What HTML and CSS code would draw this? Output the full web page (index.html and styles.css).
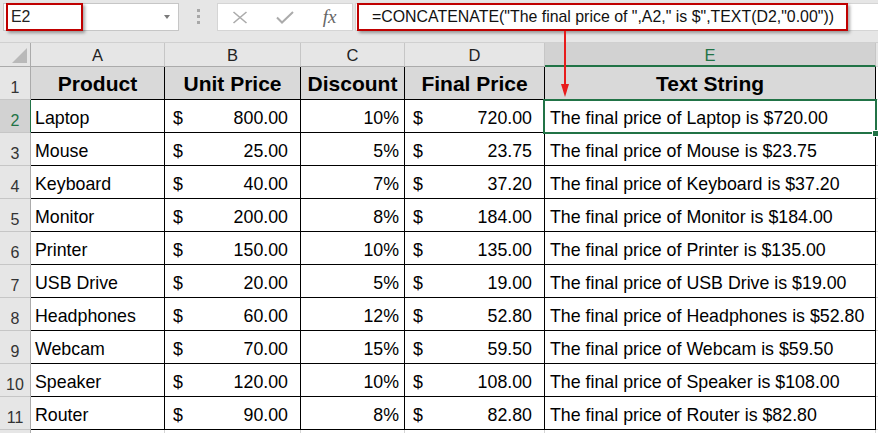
FILE: index.html
```html
<!DOCTYPE html>
<html>
<head>
<meta charset="utf-8">
<link rel="stylesheet" href="styles.css">
</head>
<body>
<div class="toolbar">
  <div class="namebox">
    <span class="name-hl">E2</span>
    <span class="dd"></span>
  </div>
  <div class="grip"><i></i><i></i><i></i></div>
  <div class="fbtns">
    <span class="slot"><svg width="16" height="13" viewBox="0 0 16 13"><path d="M1.5 1 L14.5 12 M14.5 1 L1.5 12" stroke="#ababab" stroke-width="1.6" fill="none"/></svg></span>
    <span class="slot"><svg width="18" height="13" viewBox="0 0 18 13"><path d="M1 6.5 L6 11.5 L17 1" stroke="#ababab" stroke-width="2" fill="none"/></svg></span>
    <span class="slot fx">fx</span>
  </div>
  <div class="formula">
    <span class="formula-hl">=CONCATENATE("The final price of ",A2," is $",TEXT(D2,"0.00"))</span>
  </div>
</div>

<div class="sheet">
  <div class="corner"></div>
  <div class="ch">A</div>
  <div class="ch">B</div>
  <div class="ch">C</div>
  <div class="ch">D</div>
  <div class="ch sel">E</div>
  <div class="ch f"></div>

  <div class="rh">1</div>
  <div class="c hd">Product</div>
  <div class="c hd">Unit Price</div>
  <div class="c hd">Discount</div>
  <div class="c hd">Final Price</div>
  <div class="c hd">Text String</div>
  <div class="f"></div>

  <div class="rh sel">2</div>
  <div class="c name">Laptop</div>
  <div class="c acc"><span>$</span><span>800.00</span></div>
  <div class="c pct">10%</div>
  <div class="c acc"><span>$</span><span>720.00</span></div>
  <div class="c txt">The final price of Laptop is $720.00</div>
  <div class="f"></div>

  <div class="rh">3</div>
  <div class="c name">Mouse</div>
  <div class="c acc"><span>$</span><span>25.00</span></div>
  <div class="c pct">5%</div>
  <div class="c acc"><span>$</span><span>23.75</span></div>
  <div class="c txt">The final price of Mouse is $23.75</div>
  <div class="f"></div>

  <div class="rh">4</div>
  <div class="c name">Keyboard</div>
  <div class="c acc"><span>$</span><span>40.00</span></div>
  <div class="c pct">7%</div>
  <div class="c acc"><span>$</span><span>37.20</span></div>
  <div class="c txt">The final price of Keyboard is $37.20</div>
  <div class="f"></div>

  <div class="rh">5</div>
  <div class="c name">Monitor</div>
  <div class="c acc"><span>$</span><span>200.00</span></div>
  <div class="c pct">8%</div>
  <div class="c acc"><span>$</span><span>184.00</span></div>
  <div class="c txt">The final price of Monitor is $184.00</div>
  <div class="f"></div>

  <div class="rh">6</div>
  <div class="c name">Printer</div>
  <div class="c acc"><span>$</span><span>150.00</span></div>
  <div class="c pct">10%</div>
  <div class="c acc"><span>$</span><span>135.00</span></div>
  <div class="c txt">The final price of Printer is $135.00</div>
  <div class="f"></div>

  <div class="rh">7</div>
  <div class="c name">USB Drive</div>
  <div class="c acc"><span>$</span><span>20.00</span></div>
  <div class="c pct">5%</div>
  <div class="c acc"><span>$</span><span>19.00</span></div>
  <div class="c txt">The final price of USB Drive is $19.00</div>
  <div class="f"></div>

  <div class="rh">8</div>
  <div class="c name">Headphones</div>
  <div class="c acc"><span>$</span><span>60.00</span></div>
  <div class="c pct">12%</div>
  <div class="c acc"><span>$</span><span>52.80</span></div>
  <div class="c txt">The final price of Headphones is $52.80</div>
  <div class="f"></div>

  <div class="rh">9</div>
  <div class="c name">Webcam</div>
  <div class="c acc"><span>$</span><span>70.00</span></div>
  <div class="c pct">15%</div>
  <div class="c acc"><span>$</span><span>59.50</span></div>
  <div class="c txt">The final price of Webcam is $59.50</div>
  <div class="f"></div>

  <div class="rh">10</div>
  <div class="c name">Speaker</div>
  <div class="c acc"><span>$</span><span>120.00</span></div>
  <div class="c pct">10%</div>
  <div class="c acc"><span>$</span><span>108.00</span></div>
  <div class="c txt">The final price of Speaker is $108.00</div>
  <div class="f"></div>

  <div class="rh">11</div>
  <div class="c name">Router</div>
  <div class="c acc"><span>$</span><span>90.00</span></div>
  <div class="c pct">8%</div>
  <div class="c acc"><span>$</span><span>82.80</span></div>
  <div class="c txt">The final price of Router is $82.80</div>
  <div class="f"></div>

  <div class="rh"></div>
  <div class="g"></div>
  <div class="g"></div>
  <div class="g"></div>
  <div class="g"></div>
  <div class="g"></div>
  <div class="f"></div>

  <div class="selection"></div>
  <div class="handle"></div>
</div>

<svg class="arrow" width="12" height="68" viewBox="0 0 12 68">
  <path d="M6 0 L6 56" stroke="#e81c1c" stroke-width="2"/>
  <path d="M2 53 L10 53 L6 66 Z" fill="#e81c1c"/>
</svg>
</body>
</html>
```

FILE: styles.css
```css
* { box-sizing: border-box; }
html, body { margin: 0; padding: 0; }
body {
  width: 878px;
  height: 433px;
  overflow: hidden;
  background: #e6e6e6;
  font-family: "Liberation Sans", Arial, sans-serif;
  position: relative;
}

/* ---------- formula bar ---------- */
.toolbar {
  height: 43px;
  display: flex;
  align-items: flex-start;
  padding-top: 3px;
  border-bottom: 1px solid #d0d0d0;
}
.namebox {
  margin-left: 3px;
  width: 176px;
  height: 28px;
  background: #fff;
  border: 1px solid #c6c6c6;
  display: flex;
  align-items: center;
}
.name-hl {
  margin: -1px 0 -1px 2px;
  height: 28px;
  width: 77px;
  border: 2px solid #c00000;
  box-shadow: 2px 2px 3px rgba(0, 0, 0, 0.35);
  font-size: 15.9px;
  padding-left: 3px;
  display: flex;
  align-items: center;
  color: #222;
}
.dd {
  margin-left: auto;
  margin-right: 8px;
  width: 0;
  height: 0;
  border-left: 3.5px solid transparent;
  border-right: 3.5px solid transparent;
  border-top: 4px solid #7a7a7a;
}
.grip {
  margin-left: 18px;
  padding-top: 6px;
  display: flex;
  flex-direction: column;
  gap: 3px;
}
.grip i {
  display: block;
  width: 3px;
  height: 3px;
  background: #a8a8a8;
}
.fbtns {
  margin-left: 17px;
  width: 136px;
  height: 28px;
  background: #fff;
  border: 1px solid #d5d5d5;
  display: flex;
  align-items: center;
}
.slot {
  flex: 1;
  display: flex;
  justify-content: center;
  align-items: center;
}
.fx {
  font-family: "Liberation Serif", "Times New Roman", serif;
  font-style: italic;
  font-size: 19px;
  color: #666;
  line-height: 20px;
  margin-top: -1px;
}
.formula {
  margin-left: 2px;
  flex: 1;
  height: 28px;
  background: #fff;
  border: 1px solid #d5d5d5;
  border-right: none;
  display: flex;
  align-items: center;
}
.formula-hl {
  margin: -1px 0 -1px 1px;
  height: 28px;
  width: 491px;
  border: 2px solid #c00000;
  box-shadow: 2px 2px 3px rgba(0, 0, 0, 0.35);
  padding-left: 13px;
  font-size: 15.9px;
  display: flex;
  align-items: center;
  white-space: nowrap;
  color: #111;
}

/* ---------- sheet ---------- */
.sheet {
  position: relative;
  display: grid;
  grid-template-columns: 31px 134px 136px 104px 140px 331px 1fr;
  grid-template-rows: 24px;
  grid-auto-rows: 33px;
  background: #fff;
}
.corner {
  position: relative;
  background: #e6e6e6;
  border-right: 1px solid #ababab;
  border-bottom: 1px solid #ababab;
}
.corner::after {
  content: "";
  position: absolute;
  right: 3px;
  bottom: 3px;
  width: 15px;
  height: 15px;
  background: #b9b9b9;
  clip-path: polygon(100% 0, 100% 100%, 0 100%);
}
.ch {
  background: #e6e6e6;
  border-right: 1px solid #c6c6c6;
  border-bottom: 1px solid #ababab;
  text-align: center;
  font-size: 16.5px;
  line-height: 20px;
  padding-top: 2px;
  color: #222;
}
.ch.sel {
  background: #d2d2d2;
  color: #217346;
  border-bottom: 2px solid #217346;
}
.ch.f { border-right: none; }
.rh {
  background: #e6e6e6;
  border-right: 1px solid #ababab;
  border-bottom: 1px solid #c6c6c6;
  text-align: center;
  font-size: 16px;
  line-height: 20px;
  padding-top: 11px;
  color: #333;
}
.rh.sel {
  background: #d2d2d2;
  color: #217346;
  border-right: 1px solid #217346;
}
.c {
  border-right: 1px solid #000;
  border-bottom: 1px solid #000;
  font-size: 17.8px;
  line-height: 20px;
  padding-top: 8px;
  white-space: nowrap;
  overflow: hidden;
  color: #000;
}
.c.hd {
  background: #d9d9d9;
  font-weight: bold;
  font-size: 21px;
  line-height: 24px;
  padding-top: 5px;
  text-align: center;
}
.name { padding-left: 4px; }
.acc {
  display: flex;
  justify-content: space-between;
  padding-left: 8px;
  padding-right: 12px;
}
.pct { text-align: right; padding-right: 5px; }
.txt { padding-left: 5px; }
.f { border-bottom: 1px solid #d4d4d4; }
.g {
  border-right: 1px solid #d4d4d4;
  border-bottom: 1px solid #d4d4d4;
}

/* active cell */
.selection {
  position: absolute;
  left: 543px;
  top: 56px;
  width: 334px;
  height: 35px;
  border: 2px solid #217346;
}
.handle {
  position: absolute;
  left: 872px;
  top: 87px;
  width: 7px;
  height: 7px;
  background: #217346;
  border: 1px solid #fff;
}

/* annotation arrow */
.arrow {
  position: absolute;
  left: 559px;
  top: 31px;
}
```
